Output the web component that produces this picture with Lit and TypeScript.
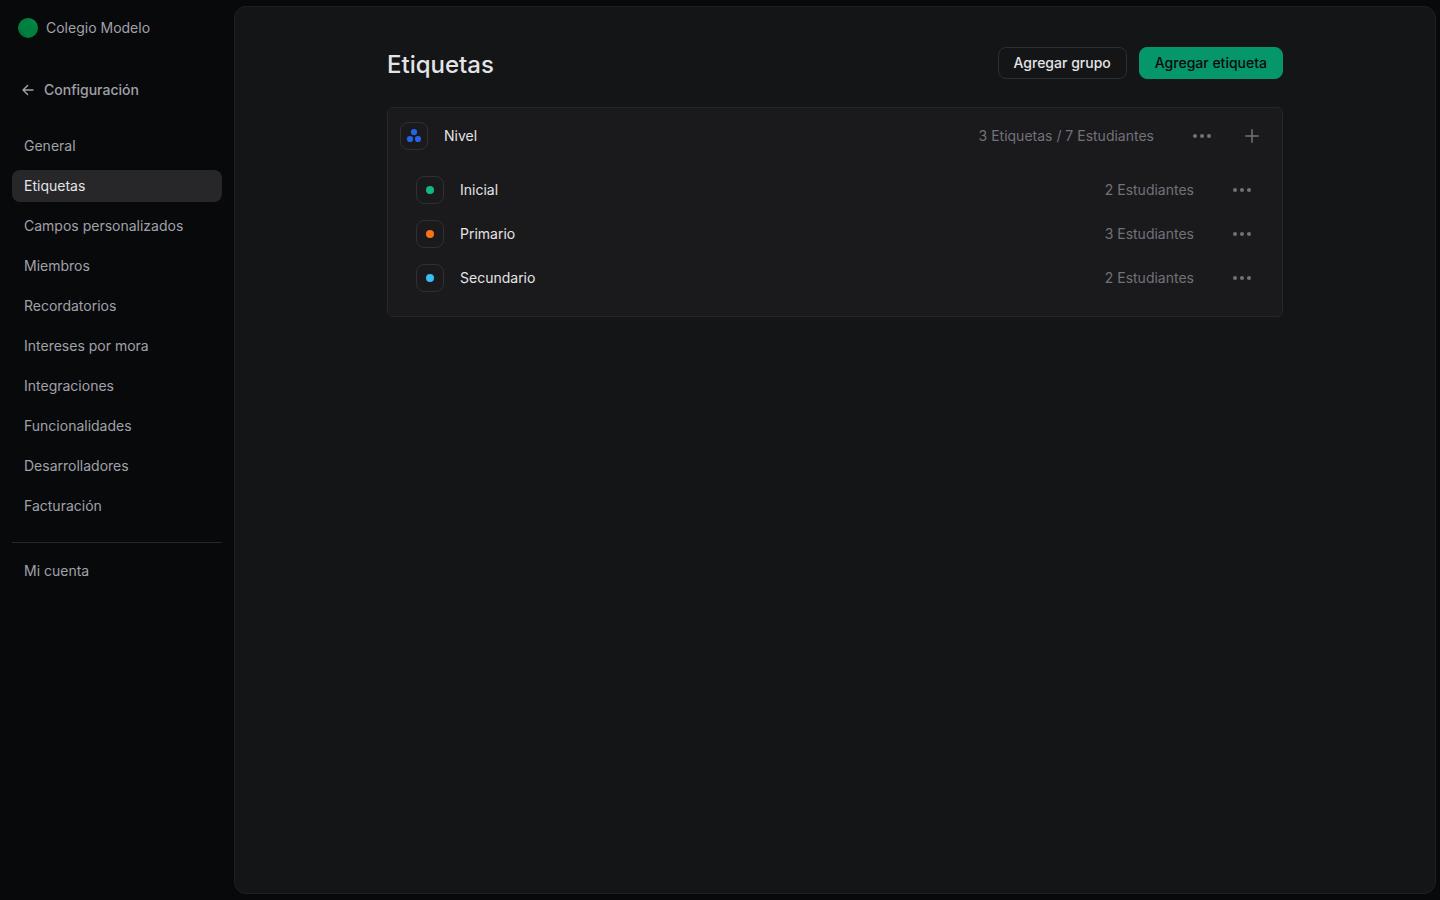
import { LitElement, html, css, svg } from "lit";
import { customElement, property } from "lit/decorators.js";
import { classMap } from "lit/directives/class-map.js";

interface Tag {
  name: string;
  color: string;
  students: number;
}

interface TagGroup {
  name: string;
  color: string;
  tags: Tag[];
}

const SECTIONS = [
  "General",
  "Etiquetas",
  "Campos personalizados",
  "Miembros",
  "Recordatorios",
  "Intereses por mora",
  "Integraciones",
  "Funcionalidades",
  "Desarrolladores",
  "Facturación",
];

const GROUPS: TagGroup[] = [
  {
    name: "Nivel",
    color: "#2563eb",
    tags: [
      { name: "Inicial", color: "#10b981", students: 2 },
      { name: "Primario", color: "#f97316", students: 3 },
      { name: "Secundario", color: "#38bdf8", students: 2 },
    ],
  },
];

const dotsIcon = html`<svg width="20" height="20" viewBox="0 0 20 20" fill="currentColor" aria-hidden="true">
  ${svg`<circle cx="3" cy="10" r="2"/><circle cx="10" cy="10" r="2"/><circle cx="17" cy="10" r="2"/>`}
</svg>`;

const plusIcon = html`<svg width="20" height="20" viewBox="0 0 20 20" fill="none" stroke="currentColor" stroke-width="1.5" stroke-linecap="round" aria-hidden="true">
  <path d="M10 3.75v12.5M3.75 10h12.5" />
</svg>`;

const backIcon = html`<svg width="16" height="16" viewBox="0 0 16 16" fill="none" stroke="currentColor" stroke-width="1.4" stroke-linecap="round" stroke-linejoin="round" aria-hidden="true">
  <path d="M13 8H3.2M7.6 3.4 3 8l4.6 4.6" />
</svg>`;

@customElement("settings-sidebar")
export class SettingsSidebar extends LitElement {
  @property() current = "";

  static styles = css`
    :host {
      display: block;
      padding: 12px;
      color: #a1a1aa;
    }
    a {
      color: inherit;
      text-decoration: none;
    }
    .school {
      display: flex;
      align-items: center;
      gap: 8px;
      height: 32px;
      padding: 0 6px;
    }
    .avatar {
      width: 20px;
      height: 20px;
      border-radius: 50%;
      background: linear-gradient(45deg, #016d35 15%, #00803f 30%, #00803f 70%, #00964a 85%);
    }
    .back {
      display: flex;
      align-items: center;
      gap: 8px;
      height: 32px;
      margin: 30px 0 24px;
      padding: 0 8px;
      font-weight: 500;
    }
    .list {
      display: flex;
      flex-direction: column;
      gap: 8px;
      margin: 0;
      padding: 0;
      list-style: none;
    }
    .link {
      display: flex;
      align-items: center;
      height: 32px;
      padding: 0 12px;
      border-radius: 8px;
    }
    .link.active {
      background: #27272a;
      color: #e4e4e7;
    }
    .rule {
      height: 1px;
      margin: 20px 0 12px;
      border: 0;
      background: #27272a;
    }
  `;

  render() {
    return html`
      <div class="school"><span class="avatar"></span><span>Colegio Modelo</span></div>
      <a class="back" href="#inicio">${backIcon}<span>Configuración</span></a>
      <nav aria-label="Configuración">
        <ul class="list">
          ${SECTIONS.map((name) => {
            const active = name === this.current;
            return html`<li>
              <a class=${classMap({ link: true, active })} href="#${name}" aria-current=${active ? "page" : "false"}>${name}</a>
            </li>`;
          })}
        </ul>
        <hr class="rule" />
        <a class="link" href="#cuenta">Mi cuenta</a>
      </nav>
    `;
  }
}

@customElement("tag-group")
export class TagGroupCard extends LitElement {
  @property({ attribute: false }) group!: TagGroup;

  static styles = css`
    :host {
      display: block;
      padding: 6px 10px 16px 12px;
      border: 1px solid #27272a;
      border-radius: 6px;
      background: #1a1a1c;
      color: #e4e4e7;
    }
    .list {
      margin: 0;
      padding: 10px 10px 0 16px;
      list-style: none;
    }
    .row {
      display: flex;
      align-items: center;
      height: 44px;
    }
    .swatch {
      display: grid;
      place-items: center;
      box-sizing: border-box;
      width: 28px;
      height: 28px;
      margin-right: 16px;
      border: 1px solid #303033;
      border-radius: 8px;
    }
    .name {
      flex: 1;
      margin: 0;
      font: inherit;
    }
    .count {
      margin-right: 28px;
      color: #71717a;
    }
    .icon {
      display: grid;
      place-items: center;
      width: 40px;
      height: 32px;
      padding: 0;
      border: 0;
      border-radius: 8px;
      background: none;
      color: #71717a;
    }
    .icon + .icon {
      margin-left: 10px;
    }
  `;

  render() {
    const { name, color, tags } = this.group;
    const total = tags.reduce((sum, tag) => sum + tag.students, 0);
    return html`
      <div class="row">
        <span class="swatch">
          <svg width="16" height="16" viewBox="0 0 16 16" fill=${color} aria-hidden="true">
            <circle cx="8" cy="4" r="3.1" /><circle cx="4" cy="11" r="3.1" /><circle cx="12" cy="11" r="3.1" />
          </svg>
        </span>
        <h2 class="name">${name}</h2>
        <span class="count">${tags.length} Etiquetas / ${total} Estudiantes</span>
        <button class="icon" type="button" aria-label="Opciones de ${name}">${dotsIcon}</button>
        <button class="icon" type="button" aria-label="Agregar etiqueta a ${name}">${plusIcon}</button>
      </div>
      <ul class="list">
        ${tags.map(
          (tag) => html`<li class="row">
            <span class="swatch">
              <svg width="8" height="8" viewBox="0 0 8 8" fill=${tag.color} aria-hidden="true"><circle cx="4" cy="4" r="4" /></svg>
            </span>
            <span class="name">${tag.name}</span>
            <span class="count">${tag.students} Estudiantes</span>
            <button class="icon" type="button" aria-label="Opciones de ${tag.name}">${dotsIcon}</button>
          </li>`
        )}
      </ul>
    `;
  }
}

@customElement("app-root")
export class AppRoot extends LitElement {
  static styles = css`
    :host {
      display: grid;
      grid-template-columns: 234px minmax(0, 1fr);
      min-height: 100vh;
      background: #08090a;
      font-family: Inter, "Liberation Sans", sans-serif;
      font-size: 14px;
      line-height: 20px;
    }
    .panel {
      margin: 6px 4px 6px 0;
      padding: 40px 24px;
      border: 1px solid #1f2022;
      border-radius: 12px;
      background: #141517;
    }
    .content {
      max-width: 896px;
      margin: 0 auto;
    }
    .header {
      display: flex;
      align-items: flex-start;
      gap: 12px;
      margin-bottom: 24px;
    }
    .title {
      flex: 1;
      margin: 0;
      color: #e4e4e7;
      font-size: 24px;
      line-height: 36px;
      font-weight: 500;
    }
    .button {
      height: 32px;
      padding: 0 15px;
      border: 1px solid #2e2e31;
      border-radius: 8px;
      background: none;
      color: #e4e4e7;
      font: inherit;
      font-weight: 500;
    }
    .button.primary {
      border-color: #059669;
      background: #059669;
      color: #09090b;
    }
  `;

  render() {
    return html`
      <settings-sidebar current="Etiquetas"></settings-sidebar>
      <main class="panel">
        <div class="content">
          <header class="header">
            <h1 class="title">Etiquetas</h1>
            <button class="button" type="button">Agregar grupo</button>
            <button class="button primary" type="button">Agregar etiqueta</button>
          </header>
          ${GROUPS.map((group) => html`<tag-group .group=${group}></tag-group>`)}
        </div>
      </main>
    `;
  }
}
